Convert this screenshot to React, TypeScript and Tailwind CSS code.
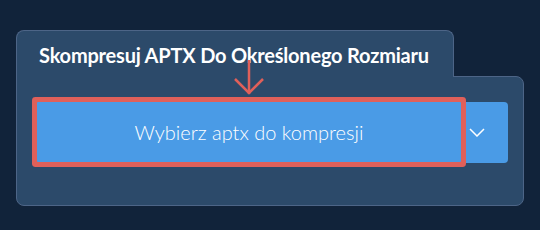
import React from 'react'

export default function App() {
  return (
    <div className="min-h-screen bg-[#11233a] pt-[30px] pl-4 font-['Lato','Liberation_Sans',sans-serif]">
      <div className="relative w-[508px]">
        {/* tab */}
        <div className="relative z-10 -mb-px h-[47px] w-[438px] rounded-t-lg border border-b-0 border-[#4d6587] bg-[#2c4a6a] pl-[22px] pt-[14px]">
          <div className="text-[20px] font-bold leading-none tracking-[-0.2px] text-white">
            Skompresuj APTX Do Określonego Rozmiaru
          </div>
        </div>

        {/* panel */}
        <div className="h-[130px] rounded-b-lg rounded-tr-lg border border-[#4d6587] bg-[#2c4a6a] pl-5 pt-[25px]">
          <div className="flex h-[61px] w-[471px]">
            <button className="relative z-10 flex h-[60px] w-[424px] items-center justify-center rounded-[1px] bg-[#4a9be6] text-[20px] font-light text-white ring-[5px] ring-[#e0605a]">
              Wybierz aptx do kompresji
            </button>
            <button className="flex h-[61px] flex-1 items-center rounded-r-[4px] bg-[#4a9be6] pl-[8px] text-white">
              <svg width="16" height="9" viewBox="0 0 16 9" fill="none" stroke="currentColor" strokeWidth="1.5">
                <path d="M1 1l7 7 7-7" />
              </svg>
            </button>
          </div>
        </div>

        {/* annotation arrow */}
        <svg
          className="absolute left-[218px] top-[30px] z-20"
          width="30"
          height="36"
          viewBox="0 0 30 36"
          fill="none"
          stroke="#e0605a"
          strokeWidth="2.5"
        >
          <path d="M15 0v34" />
          <path d="M1 19l14 14 14-14" />
        </svg>
      </div>
    </div>
  )
}
